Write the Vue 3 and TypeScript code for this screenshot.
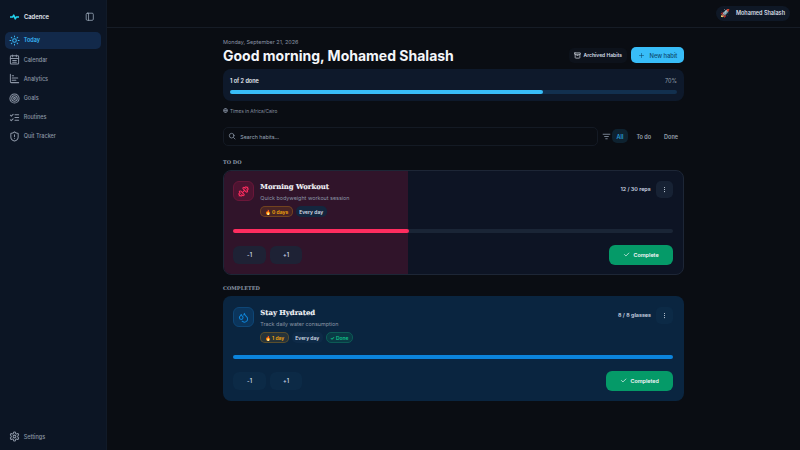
<script setup lang="ts">
import { ref } from 'vue';

type NavItem = { label: string; icon: string; active?: boolean };

const navItems = ref<NavItem[]>([
  { label: 'Today', icon: 'sun', active: true },
  { label: 'Calendar', icon: 'calendar' },
  { label: 'Analytics', icon: 'chart' },
  { label: 'Goals', icon: 'target' },
  { label: 'Routines', icon: 'list' },
  { label: 'Quit Tracker', icon: 'shield' },
]);

const filters = ref(['All', 'To do', 'Done']);
const doneShare = ref(70);
</script>

<template>
  <div class="app">
    <aside class="sidebar">
      <div class="brand">
        <svg class="brand-icon" viewBox="0 0 24 16" fill="none" stroke="#22d3ee" stroke-width="4" stroke-linecap="round" stroke-linejoin="round">
          <path d="M1 8h6l3-5 4 10 3-5h6" />
        </svg>
        <span class="brand-name">Cadence</span>
        <svg class="collapse-icon" viewBox="0 0 24 24" fill="none" stroke="#9aa7b8" stroke-width="2" stroke-linecap="round" stroke-linejoin="round">
          <rect x="3" y="3" width="18" height="18" rx="3" />
          <path d="M9 3v18" />
        </svg>
      </div>
      <nav class="nav">
        <div v-for="item in navItems" :key="item.label" class="nav-item" :class="{ active: item.active }">
          <svg class="nav-icon" viewBox="0 0 24 24" fill="none" stroke="currentColor" stroke-width="2.200" stroke-linecap="round" stroke-linejoin="round">
            <template v-if="item.icon === 'sun'">
              <circle cx="12" cy="12" r="4" />
              <path d="M12 2v2M12 20v2M4.9 4.9l1.4 1.4M17.7 17.7l1.4 1.4M2 12h2M20 12h2M4.9 19.1l1.4-1.4M17.7 6.3l1.4-1.4" />
            </template>
            <template v-else-if="item.icon === 'calendar'">
              <rect x="3" y="4" width="18" height="18" rx="2" />
              <path d="M8 2v4M16 2v4M3 10h18M8 14h8M8 18h8" />
            </template>
            <template v-else-if="item.icon === 'chart'">
              <path d="M3 3v16a2 2 0 0 0 2 2h16M7 16h8M7 11h12M7 6h3" />
            </template>
            <template v-else-if="item.icon === 'target'">
              <circle cx="12" cy="12" r="10" />
              <circle cx="12" cy="12" r="6" />
              <circle cx="12" cy="12" r="2" />
            </template>
            <template v-else-if="item.icon === 'list'">
              <path d="M3 17l2 2 4-4M3 7l2 2 4-4M13 6h8M13 12h8M13 18h8" />
            </template>
            <template v-else>
              <path d="M20 13c0 5-3.5 7.5-7.660 8.950a1 1 0 0 1-.670-.010C7.500 20.500 4 18 4 13V6a1 1 0 0 1 1-1c2 0 4.500-1.200 6.240-2.720a1.170 1.170 0 0 1 1.520 0C14.510 3.810 17 5 19 5a1 1 0 0 1 1 1z" />
              <path d="M12 8v4M12 16h.01" />
            </template>
          </svg>
          <span>{{ item.label }}</span>
        </div>
      </nav>
      <div class="nav-item">
        <svg class="nav-icon" viewBox="0 0 24 24" fill="none" stroke="currentColor" stroke-width="2.200" stroke-linecap="round" stroke-linejoin="round">
          <path d="M12.220 2h-.44a2 2 0 0 0-2 2v.18a2 2 0 0 1-1 1.730l-.43.25a2 2 0 0 1-2 0l-.15-.08a2 2 0 0 0-2.730.73l-.22.38a2 2 0 0 0 .73 2.730l.15.1a2 2 0 0 1 1 1.720v.51a2 2 0 0 1-1 1.740l-.15.09a2 2 0 0 0-.73 2.730l.22.38a2 2 0 0 0 2.730.73l.15-.08a2 2 0 0 1 2 0l.43.25a2 2 0 0 1 1 1.730V20a2 2 0 0 0 2 2h.44a2 2 0 0 0 2-2v-.18a2 2 0 0 1 1-1.730l.43-.25a2 2 0 0 1 2 0l.15.08a2 2 0 0 0 2.730-.73l.22-.39a2 2 0 0 0-.73-2.730l-.15-.08a2 2 0 0 1-1-1.740v-.5a2 2 0 0 1 1-1.740l.15-.09a2 2 0 0 0 .73-2.730l-.22-.38a2 2 0 0 0-2.730-.73l-.15.08a2 2 0 0 1-2 0l-.43-.25a2 2 0 0 1-1-1.730V4a2 2 0 0 0-2-2z" />
          <circle cx="12" cy="12" r="3" />
        </svg>
        <span>Settings</span>
      </div>
    </aside>

    <div class="content">
      <header class="topbar">
        <div class="user-chip">
          <span class="rocket">🚀</span>
          <span>Mohamed Shalash</span>
        </div>
      </header>

      <main class="main">
        <div class="column">
          <div class="page-head">
            <div>
              <p class="date">Monday, September 21, 2026</p>
              <h1>Good morning, Mohamed Shalash</h1>
            </div>
            <div class="head-actions">
              <button class="archived">
                <svg viewBox="0 0 24 24" fill="none" stroke="currentColor" stroke-width="2.400" stroke-linecap="round" stroke-linejoin="round">
                  <rect x="2" y="3" width="20" height="5" rx="1" />
                  <path d="M4 8v11a2 2 0 0 0 2 2h12a2 2 0 0 0 2-2V8M10 12h4" />
                </svg>
                Archived Habits
              </button>
              <button class="new-habit">
                <svg viewBox="0 0 24 24" fill="none" stroke="currentColor" stroke-width="2" stroke-linecap="round">
                  <path d="M5 12h14M12 5v14" />
                </svg>
                New habit
              </button>
            </div>
          </div>

          <section class="summary">
            <div class="summary-row">
              <span class="summary-done">1 of 2 done</span>
              <span class="summary-pct">{{ doneShare }}%</span>
            </div>
            <div class="summary-track">
              <div class="summary-fill" :style="{ width: doneShare + '%' }"></div>
            </div>
          </section>

          <p class="timezone">
            <svg viewBox="0 0 24 24" fill="none" stroke="#8b97a8" stroke-width="3">
              <circle cx="12" cy="12" r="10" />
              <path d="M2 12h20M12 2c-5 6-5 14 0 20M12 2c5 6 5 14 0 20" />
            </svg>
            Times in Africa/Cairo
          </p>

          <div class="toolbar">
            <div class="search">
              <svg viewBox="0 0 24 24" fill="none" stroke="#9aa7b8" stroke-width="2" stroke-linecap="round">
                <circle cx="11" cy="11" r="7" />
                <path d="M21 21l-4.300-4.300" />
              </svg>
              <span class="search-text">Search habits...</span>
            </div>
            <svg class="filter-icon" viewBox="0 0 24 24" fill="none" stroke="#9aa7b8" stroke-width="2" stroke-linecap="round">
              <path d="M3 6h18M7 12h10M10 18h4" />
            </svg>
            <div class="filters">
              <span v-for="(f, i) in filters" :key="f" class="filter" :class="{ selected: i === 0 }">{{ f }}</span>
            </div>
          </div>

          <h2 class="section-label">TO DO</h2>
          <article class="habit todo">
            <div class="habit-wash" style="width: 40%"></div>
            <div class="habit-top">
              <div class="habit-icon pink">
                <svg viewBox="0 0 24 24" fill="none" stroke="#ff2d5f" stroke-width="2.200" stroke-linecap="round" stroke-linejoin="round">
                  <path d="M17.596 12.768a2 2 0 1 0 2.829-2.829l-1.768-1.767a2 2 0 0 0 2.828-2.829l-2.828-2.828a2 2 0 0 0-2.829 2.828l-1.767-1.768a2 2 0 1 0-2.829 2.829z" />
                  <path d="M2.500 21.500l1.400-1.400M20.100 3.900l1.400-1.400" />
                  <path d="M5.343 21.485a2 2 0 1 0 2.829-2.828l1.767 1.768a2 2 0 1 0 2.829-2.829l-6.364-6.364a2 2 0 1 0-2.829 2.829l1.768 1.767a2 2 0 0 0-2.828 2.829z" />
                  <path d="M9.600 14.400l4.800-4.800" />
                </svg>
              </div>
              <div class="habit-info">
                <h3>Morning Workout</h3>
                <p>Quick bodyweight workout session</p>
                <div class="tags">
                  <span class="tag streak">🔥 0 days</span>
                  <span class="tag freq">Every day</span>
                </div>
              </div>
              <div class="habit-count">12 / 30 reps</div>
              <button class="more solid">
                <svg viewBox="0 0 24 24" fill="#cbd5e1"><circle cx="12" cy="5" r="2" /><circle cx="12" cy="12" r="2" /><circle cx="12" cy="19" r="2" /></svg>
              </button>
            </div>
            <div class="habit-track">
              <div class="habit-fill pink-fill" style="width: 40%"></div>
            </div>
            <div class="habit-bottom">
              <div class="steppers">
                <button class="step">-1</button>
                <button class="step">+1</button>
              </div>
              <button class="complete">
                <svg viewBox="0 0 24 24" fill="none" stroke="currentColor" stroke-width="2.400" stroke-linecap="round" stroke-linejoin="round"><path d="M5 12l5 5L20 7" /></svg>
                Complete
              </button>
            </div>
          </article>

          <h2 class="section-label second">COMPLETED</h2>
          <article class="habit finished">
            <div class="habit-top">
              <div class="habit-icon blue">
                <svg viewBox="0 0 24 24" fill="none" stroke="#0f85d8" stroke-width="2.200" stroke-linecap="round" stroke-linejoin="round">
                  <path d="M7 16.300c2.200 0 4-1.830 4-4.050 0-1.160-.570-2.260-1.710-3.190S7.290 6.750 7 5.300c-.290 1.450-1.140 2.840-2.290 3.760S3 11.100 3 12.250c0 2.220 1.800 4.050 4 4.050z" />
                  <path d="M12.560 6.600A10.970 10.970 0 0 0 14 3.020c.500 2.500 2 4.900 4 6.500s3 3.500 3 5.500a6.980 6.980 0 0 1-11.910 4.970" />
                </svg>
              </div>
              <div class="habit-info">
                <h3>Stay Hydrated</h3>
                <p>Track daily water consumption</p>
                <div class="tags">
                  <span class="tag streak">🔥 1 day</span>
                  <span class="tag freq">Every day</span>
                  <span class="tag done">✓ Done</span>
                </div>
              </div>
              <div class="habit-count">8 / 8 glasses</div>
              <button class="more">
                <svg viewBox="0 0 24 24" fill="#cbd5e1"><circle cx="12" cy="5" r="2" /><circle cx="12" cy="12" r="2" /><circle cx="12" cy="19" r="2" /></svg>
              </button>
            </div>
            <div class="habit-track">
              <div class="habit-fill blue-fill" style="width: 100%"></div>
            </div>
            <div class="habit-bottom">
              <div class="steppers">
                <button class="step dim">-1</button>
                <button class="step dim">+1</button>
              </div>
              <button class="complete">
                <svg viewBox="0 0 24 24" fill="none" stroke="currentColor" stroke-width="2.400" stroke-linecap="round" stroke-linejoin="round"><path d="M5 12l5 5L20 7" /></svg>
                Completed
              </button>
            </div>
          </article>
        </div>
      </main>
    </div>
  </div>
</template>

<style>
html, body {
  margin: 0;
  background: #0a0d13;
}
</style>

<style scoped>
* {
  box-sizing: border-box;
}

.app {
  display: flex;
  width: 800px;
  height: 450px;
  overflow: hidden;
  background: #0a0d13;
  font-family: Inter, "Liberation Sans", sans-serif;
  color: #e8edf4;
}

.sidebar {
  display: flex;
  flex-direction: column;
  width: 107px;
  flex-shrink: 0;
  padding: 0 5px 5px 5px;
  background: #0c1524;
  border-right: 1px solid #111a28;
}

.brand {
  display: flex;
  align-items: center;
  height: 32.400px;
  padding: 1.500px 0 0 5px;
}

.brand-icon {
  width: 9px;
  height: 6px;
}

.brand-name {
  margin-left: 5px;
  font-size: 5.800px;
  font-weight: 600;
}

.collapse-icon {
  width: 9.500px;
  height: 9.500px;
  margin-left: auto;
  margin-right: 6.500px;
}

.nav {
  display: flex;
  flex-direction: column;
  gap: 3px;
  flex: 1;
}

.nav-item {
  display: flex;
  align-items: center;
  gap: 4.200px;
  height: 16.200px;
  padding-left: 3.500px;
  border-radius: 5px;
  font-size: 5.500px;
  font-weight: 500;
  color: #8b95a5;
}

.nav-item.active {
  background: #12294a;
  color: #38b6f5;
  font-weight: 600;
}

.nav-icon {
  width: 11px;
  height: 11px;
  flex-shrink: 0;
}

.content {
  flex: 1;
  min-width: 0;
  display: flex;
  flex-direction: column;
}

.topbar {
  display: flex;
  align-items: center;
  justify-content: flex-end;
  height: 28px;
  flex-shrink: 0;
  padding-right: 10px;
  border-bottom: 1px solid #161c26;
}

.user-chip {
  display: flex;
  align-items: center;
  gap: 6px;
  height: 15.300px;
  padding: 0 5px 0 3.500px;
  border-radius: 8px;
  background: #0f1826;
  font-size: 5.500px;
  font-weight: 600;
  color: #d7dde6;
}

.rocket {
  font-size: 8px;
}

.main {
  flex: 1;
  display: flex;
  justify-content: center;
}

.column {
  width: 461px;
  padding-top: 11px;
}

.page-head {
  display: flex;
  align-items: flex-end;
  justify-content: space-between;
}

.date {
  margin: 0;
  height: 7px;
  line-height: 7px;
  font-size: 5.450px;
  color: #8b95a5;
}

h1 {
  margin: 0;
  font-size: 14px;
  line-height: 20px;
  font-weight: 700;
  color: #f4f6fa;
}

.head-actions {
  display: flex;
  align-items: center;
  gap: 4px;
  padding-bottom: 2.600px;
}

button {
  font-family: inherit;
  border: 0;
}

.archived {
  display: flex;
  align-items: center;
  gap: 3px;
  height: 15px;
  padding: 0 5px;
  border-radius: 5px;
  background: #0d121b;
  font-size: 5px;
  font-weight: 600;
  white-space: nowrap;
  color: #d7dde6;
}

.archived svg {
  width: 7px;
  height: 7px;
}

.new-habit {
  display: flex;
  align-items: center;
  gap: 5px;
  width: 53px;
  height: 16px;
  padding: 0 6.500px;
  border-radius: 5px;
  background: #38bdf8;
  font-size: 5.800px;
  font-weight: 500;
  white-space: nowrap;
  color: #0c4a6e;
}

.new-habit svg {
  width: 7px;
  height: 7px;
}

.summary {
  height: 32px;
  margin-top: 3px;
  padding: 8px 7px 0;
  border-radius: 8px;
  background: #0e192b;
}

.summary-row {
  display: flex;
  justify-content: space-between;
  align-items: center;
  height: 8px;
  font-size: 5.500px;
}

.summary-done {
  font-weight: 600;
  color: #e8edf4;
}

.summary-pct {
  color: #98a2b0;
}

.summary-track {
  height: 4px;
  margin-top: 5px;
  border-radius: 2px;
  background: #12304f;
}

.summary-fill {
  height: 100%;
  border-radius: 2px;
  background: #38bdf8;
}

.timezone {
  display: flex;
  align-items: center;
  gap: 2px;
  height: 8px;
  margin: 5.500px 0 0;
  font-size: 4.750px;
  color: #8b95a5;
}

.timezone svg {
  width: 5px;
  height: 5px;
}

.toolbar {
  display: flex;
  align-items: center;
  height: 19.500px;
  margin-top: 12px;
}

.search {
  display: flex;
  align-items: center;
  gap: 4.300px;
  width: 375px;
  height: 19px;
  padding-left: 4px;
  border: 1px solid #141a24;
  border-radius: 5px;
  font-size: 5.300px;
  color: #9aa7b8;
}

.search-text {
  padding-top: 1px;
}

.search svg {
  width: 8px;
  height: 8px;
}

.filter-icon {
  width: 9px;
  height: 9px;
  margin-left: 3.600px;
}

.filters {
  display: flex;
  align-items: center;
  gap: 4px;
  margin-left: 1.400px;
  font-size: 5.500px;
  font-weight: 600;
  white-space: nowrap;
  color: #98a2b0;
}

.filter {
  padding: 4.500px 4.500px 3.500px;
  border-radius: 5px;
}

.filter.selected {
  background: #0e2230;
  color: #2b9fdc;
}

.section-label {
  margin: 11.700px 0 0;
  height: 8px;
  line-height: 8px;
  font-family: "DejaVu Serif", serif;
  font-size: 5px;
  font-weight: 700;
  color: #8b97a8;
}

.section-label.second {
  margin-top: 8.600px;
}

.habit {
  position: relative;
  height: 105px;
  margin-top: 4.400px;
  padding: 10.700px 10.700px 0 10.300px;
  overflow: hidden;
  border-radius: 8px;
}

.habit.todo {
  background: #0d1424;
  border: 1px solid #1d2636;
  padding: 9.700px 10px 0 9.300px;
}

.habit.finished {
  background: #0a2540;
}

.habit-wash {
  position: absolute;
  left: 0;
  top: 0;
  bottom: 0;
  background: #30142a;
}

.habit-top {
  position: relative;
  display: flex;
  align-items: flex-start;
}

.habit-icon {
  display: flex;
  align-items: center;
  justify-content: center;
  width: 20.500px;
  height: 20.500px;
  flex-shrink: 0;
  border-radius: 6px;
}

.habit-icon svg {
  width: 11px;
  height: 11px;
}

.habit-icon.pink {
  background: #4d1431;
  border: 1px solid #6a1739;
}

.habit-icon.blue {
  background: #0b355c;
  border: 1px solid #0e4676;
}

.habit-info {
  flex: 1;
  margin-left: 6.500px;
  min-width: 0;
}

h3 {
  margin: 0;
  height: 12px;
  line-height: 13px;
  font-family: "DejaVu Serif", serif;
  font-size: 6.900px;
  font-weight: 700;
  -webkit-text-stroke: 0.1px #f4f6fa;
  color: #f4f6fa;
}

.habit-info p {
  margin: 1.300px 0 0;
  height: 8px;
  line-height: 8px;
  font-size: 5.400px;
  color: #8b95a5;
}

.tags {
  display: flex;
  gap: 3px;
  margin-top: 4.400px;
}

.tag {
  display: flex;
  align-items: center;
  height: 10.500px;
  padding: 0 3.500px;
  border-radius: 5px;
  font-size: 5px;
  font-weight: 600;
  white-space: pre;
}

.tag.streak {
  background: rgba(245, 158, 11, 0.12);
  border: 1px solid rgba(245, 158, 11, 0.25);
  color: #f5a80b;
}

.tag.freq {
  background: #14263e;
  color: #d7dde6;
}

.finished .tag.freq {
  background: #0e2a47;
}

.tag.done {
  background: #0a3a45;
  border: 1px solid #0c5a55;
  color: #10c48a;
}

.habit-count {
  margin-top: 5.400px;
  margin-right: 5px;
  font-size: 5.400px;
  font-weight: 600;
  color: #cbd5e1;
}

.more {
  display: flex;
  align-items: center;
  justify-content: center;
  width: 17.300px;
  height: 17.300px;
  padding: 0;
  border-radius: 5px;
  background: #172234;
}

.more:not(.solid) {
  background: #0c2a46;
}

.more svg {
  width: 7px;
  height: 7px;
}

.habit-track {
  position: relative;
  height: 4px;
  margin-top: 11.700px;
  border-radius: 2px;
  background: #1a2536;
}

.habit-fill {
  height: 100%;
  border-radius: 2px;
}

.pink-fill {
  background: #ff2d5f;
}

.blue-fill {
  background: #0b84dc;
}

.habit-bottom {
  position: relative;
  display: flex;
  justify-content: space-between;
  align-items: center;
  margin-top: 12.600px;
}

.steppers {
  display: flex;
  gap: 4px;
}

.step {
  width: 32.500px;
  height: 17.600px;
  padding: 0;
  border-radius: 6px;
  background: #1e2235;
  font-size: 5.500px;
  font-weight: 600;
  color: #cbd5e1;
}

.step.dim {
  background: #0c2a46;
}

.complete {
  display: flex;
  align-items: center;
  justify-content: center;
  gap: 3.500px;
  height: 19.400px;
  padding: 0 14.400px;
  border-radius: 6px;
  background: #059a68;
  font-size: 5.400px;
  font-weight: 600;
  color: #f4f6fa;
}

.complete svg {
  width: 7px;
  height: 7px;
}
</style>
